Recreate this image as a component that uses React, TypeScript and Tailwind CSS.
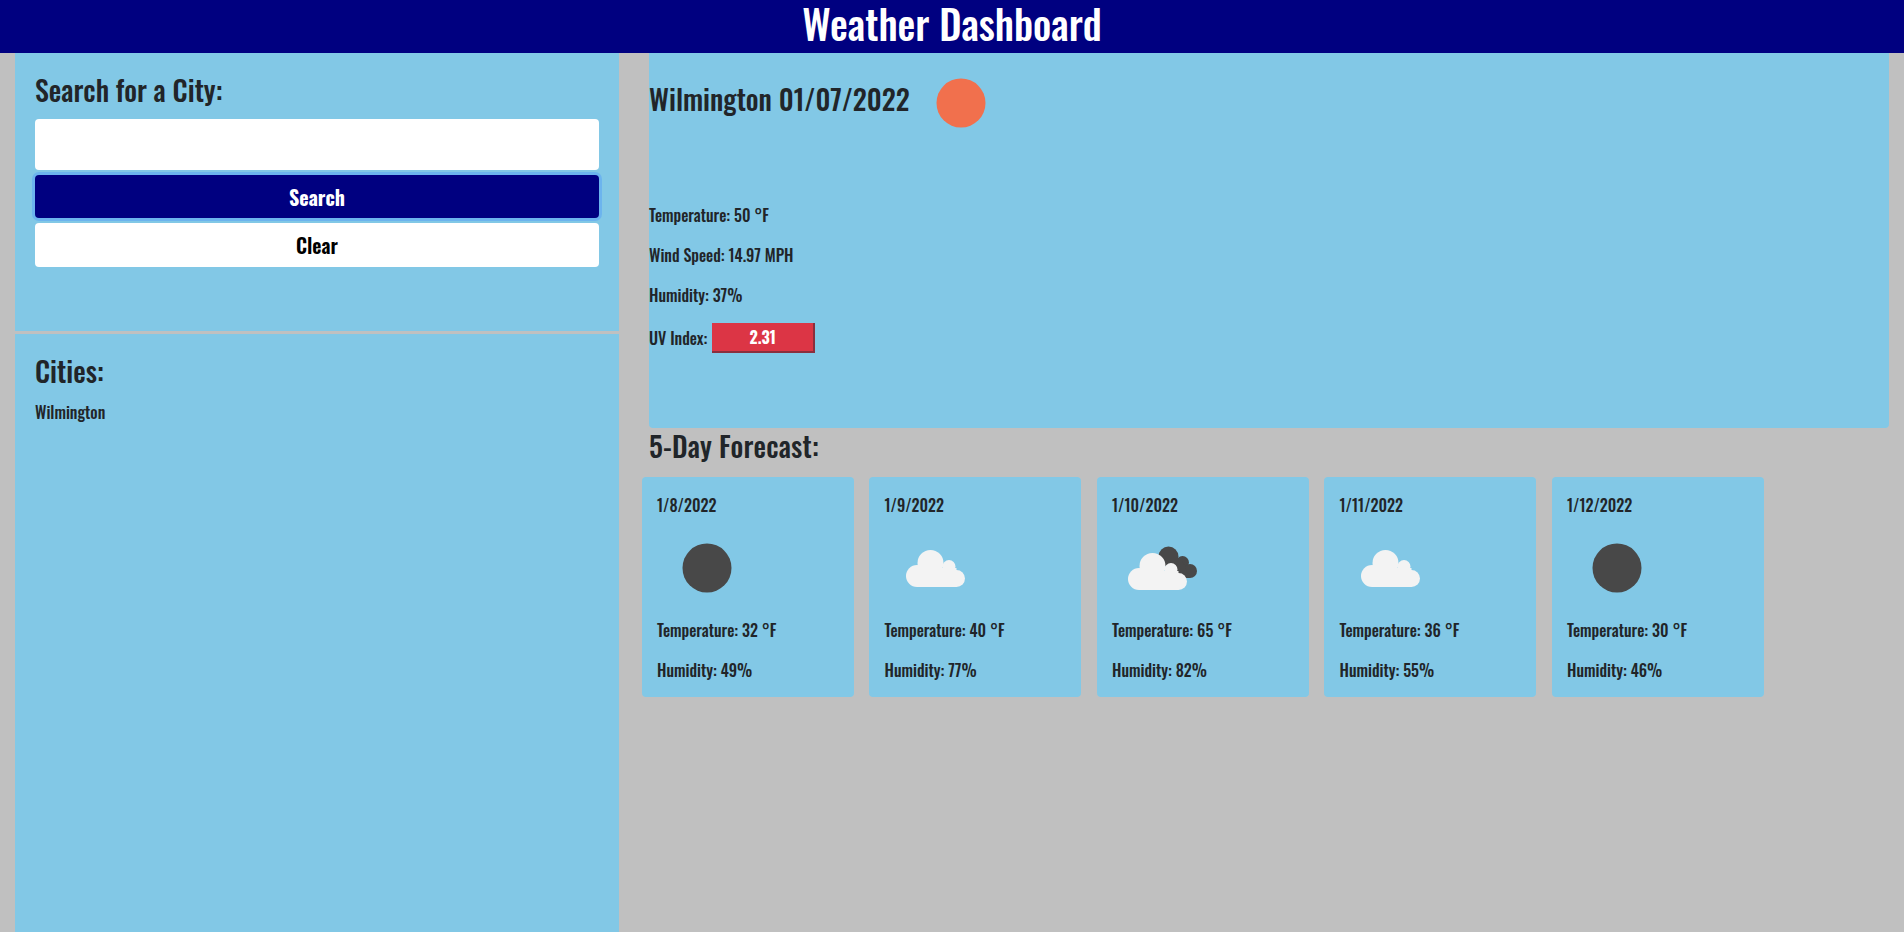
const F = "font-['Oswald','Liberation_Sans_Narrow',sans-serif]";

function Sun({ color }: { color: string }) {
  return (
    <svg viewBox="0 0 100 100" className="w-[100px] h-[100px] shrink-0">
      <circle cx="50" cy="50" r="24.5" fill={color} />
    </svg>
  );
}

function CloudShape({ x = 0, y = 0 }: { x?: number; y?: number }) {
  return (
    <g transform={`translate(${x} ${y})`} fill="#f3f3f3">
      <circle cx="32" cy="58" r="11" />
      <circle cx="45.500" cy="45" r="13" />
      <circle cx="64" cy="48.500" r="6.500" />
      <circle cx="71.500" cy="60.500" r="8.500" />
      <rect x="32" y="50" width="39.500" height="19" />
    </g>
  );
}

function Cloud() {
  return (
    <svg viewBox="0 0 100 100" className="w-[100px] h-[100px] shrink-0">
      <CloudShape />
    </svg>
  );
}

function Clouds() {
  return (
    <svg viewBox="0 0 100 100" className="w-[100px] h-[100px] shrink-0">
      <g fill="#484848">
        <circle cx="56.500" cy="38.500" r="10" />
        <circle cx="70.500" cy="44.500" r="6.500" />
        <circle cx="78" cy="53" r="7" />
        <path d="M56 42 L70 42 L78 60 L60 60z" />
      </g>
      <CloudShape x={-5} y={3} />
    </svg>
  );
}

const days = [
  { d: "1/8/2022", t: 32, h: 49, i: <Sun color="#484848" /> },
  { d: "1/9/2022", t: 40, h: 77, i: <Cloud /> },
  { d: "1/10/2022", t: 65, h: 82, i: <Clouds /> },
  { d: "1/11/2022", t: 36, h: 55, i: <Cloud /> },
  { d: "1/12/2022", t: 30, h: 46, i: <Sun color="#484848" /> },
];

export default function App() {
  return (
    <div className={`${F} h-[932px] bg-[#c0c0c0] text-[#212529] text-base font-medium flex flex-col`}>
      <header className="h-[53px] bg-[#000080] text-white text-center text-[40px] leading-[47px] font-medium shrink-0">
        Weather Dashboard
      </header>
      <div className="flex flex-1 min-h-0">
        <aside className="w-[604px] ml-[15px] flex flex-col shrink-0">
          <section className="h-[278px] bg-[#82c8e6] px-5 pt-5">
            <h2 className="text-[28px] leading-[34px]">Search for a City:</h2>
            <input className="block w-full h-[51px] mt-3 bg-white rounded" />
            <button className="block w-full h-[43px] mt-[5px] bg-[#000080] text-white text-[20px] font-bold rounded shadow-[0_0_0_3px_#6cb4ee]">Search</button>
            <button className="block w-full h-[44px] mt-[5px] bg-white text-black text-[20px] font-semibold rounded">Clear</button>
          </section>
          <section className="flex-1 mt-[3px] bg-[#82c8e6] px-5 pt-5">
            <h2 className="text-[28px] leading-[34px]">Cities:</h2>
            <p className="mt-3">Wilmington</p>
          </section>
        </aside>
        <main className="flex-1 ml-[30px] mr-[15px] min-w-0">
          <section className="h-[375px] bg-[#82c8e6] rounded-b">
            <div className="flex h-[100px]">
              <h2 className="text-[28px] leading-[34px] mt-[29px] mr-px whitespace-nowrap">Wilmington 01/07/2022</h2>
              <Sun color="#f1704d" />
            </div>
            <p className="mt-[50px] leading-6">Temperature: 50 °F</p>
            <p className="mt-4 leading-6">Wind Speed: 14.97 MPH</p>
            <p className="mt-4 leading-6">Humidity: 37%</p>
            <div className="mt-[16px] flex items-center gap-[5px]">
              <span>UV Index:</span>
              <span className="w-[103px] h-[30px] bg-[#dc3545] text-white font-bold text-center leading-[28px] border-b-2 border-r-2 border-[#8a2f3e]">2.31</span>
            </div>
          </section>
          <h2 className="text-[28px] leading-[34px] mt-[1px] tracking-[0.2px]">5-Day Forecast:</h2>
          <div className="flex gap-[15.5px] mt-[14px] -ml-[7.500px]">
            {days.map((x) => (
              <article key={x.d} className="w-[212px] h-[220px] bg-[#82c8e6] rounded pl-[15.500px] pr-[15px] pt-3">
                <p className="leading-6 mt-[4px]">{x.d}</p>
                <div className="h-[100px] mt-[1px]">{x.i}</div>
                <p className="mt-0 leading-6">Temperature: {x.t} °F</p>
                <p className="mt-4 leading-6">Humidity: {x.h}%</p>
              </article>
            ))}
          </div>
        </main>
      </div>
    </div>
  );
}
